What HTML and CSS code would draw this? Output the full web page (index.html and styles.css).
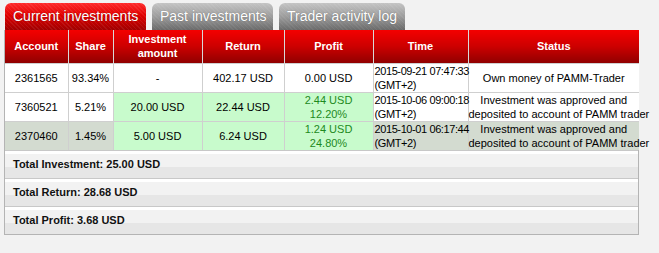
FILE: index.html
```html
<!DOCTYPE html>
<html>
<head>
<meta charset="utf-8">
<link rel="stylesheet" href="styles.css">
</head>
<body>
<div class="wrap">
  <div class="tabs">
    <div class="tab active">Current investments</div>
    <div class="tab">Past investments</div>
    <div class="tab">Trader activity log</div>
  </div>
  <div class="panel">
    <table class="grid">
      <colgroup>
        <col class="c1"><col class="c2"><col class="c3"><col class="c4"><col class="c5"><col class="c6"><col class="c7">
      </colgroup>
      <thead>
        <tr>
          <th>Account</th><th>Share</th><th>Investment<br>amount</th><th>Return</th><th>Profit</th><th>Time</th><th>Status</th>
        </tr>
      </thead>
      <tbody>
        <tr class="r1">
          <td>2361565</td><td>93.34%</td><td>-</td><td>402.17 USD</td><td>0.00 USD</td><td class="time">2015-09-21 07:47:33<br>(GMT+2)</td><td>Own money of PAMM-Trader</td>
        </tr>
        <tr class="r2">
          <td>7360521</td><td>5.21%</td><td class="g">20.00 USD</td><td class="g">22.44 USD</td><td class="g pr">2.44 USD<br>12.20%</td><td class="time">2015-10-06 09:00:18<br>(GMT+2)</td><td>Investment was approved and<br>deposited to account of PAMM trader</td>
        </tr>
        <tr class="r3">
          <td>2370460</td><td>1.45%</td><td class="g">5.00 USD</td><td class="g">6.24 USD</td><td class="g pr">1.24 USD<br>24.80%</td><td class="time">2015-10-01 06:17:44<br>(GMT+2)</td><td>Investment was approved and<br>deposited to account of PAMM trader</td>
        </tr>
      </tbody>
    </table>
    <div class="total">Total Investment: 25.00 USD</div>
    <div class="total">Total Return: 28.68 USD</div>
    <div class="total">Total Profit: 3.68 USD</div>
  </div>
</div>
</body>
</html>
```
FILE: styles.css
```css
html, body {
  margin: 0;
  padding: 0;
  background: #f2f2f2;
}
body {
  font-family: "Liberation Sans", Arial, sans-serif;
  font-size: 11px;
  color: #000;
}
.wrap {
  padding: 3px 0 0 4px;
  width: 635px;
}
.tabs {
  display: flex;
  gap: 6px;
  padding-left: 1px;
  height: 27px;
}
.tab {
  height: 27px;
  line-height: 27px;
  padding: 0 0 0 8px;
  font-size: 14px;
  color: #fff;
  white-space: nowrap;
  border-radius: 6px 6px 0 0;
  text-shadow: 0 0 1px rgba(0,0,0,0.4);
  background:
    repeating-linear-gradient(45deg, rgba(255,255,255,0.06) 0 1px, transparent 1px 3px),
    linear-gradient(#c4c4c4, #9c9c9c 50%, #6a6a6a);
  box-sizing: border-box;
}
.tab:nth-child(2) { width: 121px; }
.tab:nth-child(3) { width: 126px; }
.tab.active {
  width: 141px;
  background:
    repeating-linear-gradient(45deg, rgba(255,255,255,0.07) 0 1px, transparent 1px 3px),
    linear-gradient(#ff2a2a, #e00000 45%, #a00000);
}
.panel {
  border: 1px solid #b4b4b4;
  border-top: none;
  background: #f2f2f2;
}
.grid {
  border-collapse: collapse;
  width: 634px;
  table-layout: fixed;
}
.c1 { width: 63px; }
.c2 { width: 45px; }
.c3 { width: 89px; }
.c4 { width: 82px; }
.c5 { width: 89px; }
.c6 { width: 95px; }
.c7 { width: 171px; }
.grid th {
  height: 33px;
  padding: 0;
  color: #fff;
  font-weight: bold;
  font-size: 11px;
  line-height: 14px;
  text-align: center;
  border-left: 1px solid #d8d8d8;
  background: linear-gradient(#f40000, #cc0000 50%, #900000);
  box-sizing: border-box;
}
.grid th:first-child { border-left: none; }
.grid td {
  height: 28px;
  padding: 0;
  text-align: center;
  line-height: 14px;
  white-space: nowrap;
  border-left: 1px solid #cfcfcf;
  border-top: 1px solid #cfcfcf;
  background: #fff;
  box-sizing: border-box;
}
.grid td:first-child { border-left: none; }
.grid .r3 td { background: #d3dbd0; }
.grid td.g { background: #c8fbcc; }
.grid .r3 td.g { background: #c8fbcc; }
.grid td.pr { color: #1d8a1d; }
.grid td.time {
  text-align: left;
  padding-left: 1px;
  letter-spacing: -0.4px;
}
.total {
  height: 28px;
  box-sizing: border-box;
  border-top: 1px solid #c8c8c8;
  padding-left: 8px;
  line-height: 26px;
  font-weight: bold;
  color: #111;
  background: linear-gradient(#ffffff 0, #ffffff 3px, #f2f2f2 3px, #f2f2f2 16px, #e6e6e6 16px);
}
```
